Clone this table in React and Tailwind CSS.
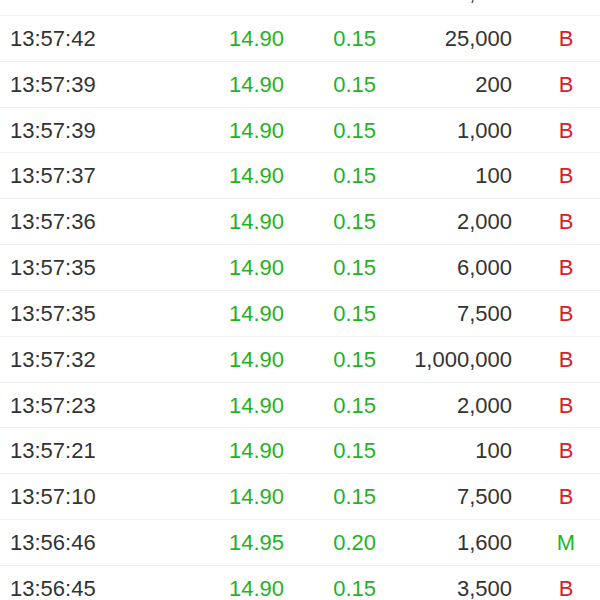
const trades = [
  { time: '13:57:42', price: '14.90', change: '0.15', volume: '75,000', type: 'B' },
  { time: '13:57:42', price: '14.90', change: '0.15', volume: '25,000', type: 'B' },
  { time: '13:57:39', price: '14.90', change: '0.15', volume: '200', type: 'B' },
  { time: '13:57:39', price: '14.90', change: '0.15', volume: '1,000', type: 'B' },
  { time: '13:57:37', price: '14.90', change: '0.15', volume: '100', type: 'B' },
  { time: '13:57:36', price: '14.90', change: '0.15', volume: '2,000', type: 'B' },
  { time: '13:57:35', price: '14.90', change: '0.15', volume: '6,000', type: 'B' },
  { time: '13:57:35', price: '14.90', change: '0.15', volume: '7,500', type: 'B' },
  { time: '13:57:32', price: '14.90', change: '0.15', volume: '1,000,000', type: 'B' },
  { time: '13:57:23', price: '14.90', change: '0.15', volume: '2,000', type: 'B' },
  { time: '13:57:21', price: '14.90', change: '0.15', volume: '100', type: 'B' },
  { time: '13:57:10', price: '14.90', change: '0.15', volume: '7,500', type: 'B' },
  { time: '13:56:46', price: '14.95', change: '0.20', volume: '1,600', type: 'M' },
  { time: '13:56:45', price: '14.90', change: '0.15', volume: '3,500', type: 'B' },
];

function TradeRow({ t }) {
  return (
    <div className="grid h-[45.83px] grid-cols-[184px_100px_92px_136px_1fr] items-center border-b border-[#f0f0f0] text-[22px]">
      <span className="pl-[10px] text-[#333333]">{t.time}</span>
      <span className="text-right text-[#1fb31f]">{t.price}</span>
      <span className="text-right text-[#1fb31f]">{t.change}</span>
      <span className="text-right text-[#333333]">{t.volume}</span>
      <span className={`pl-[20px] text-center ${t.type === 'M' ? 'text-[#1fb31f]' : 'text-[#d6202a]'}`}>
        {t.type}
      </span>
    </div>
  );
}

export default function App() {
  return (
    <div className="h-[600px] w-[600px] overflow-hidden bg-white font-['Liberation_Sans',Arial,sans-serif]">
      <div className="-mt-[29.83px]">
        {trades.map((t, i) => (
          <TradeRow key={i} t={t} />
        ))}
      </div>
    </div>
  );
}
